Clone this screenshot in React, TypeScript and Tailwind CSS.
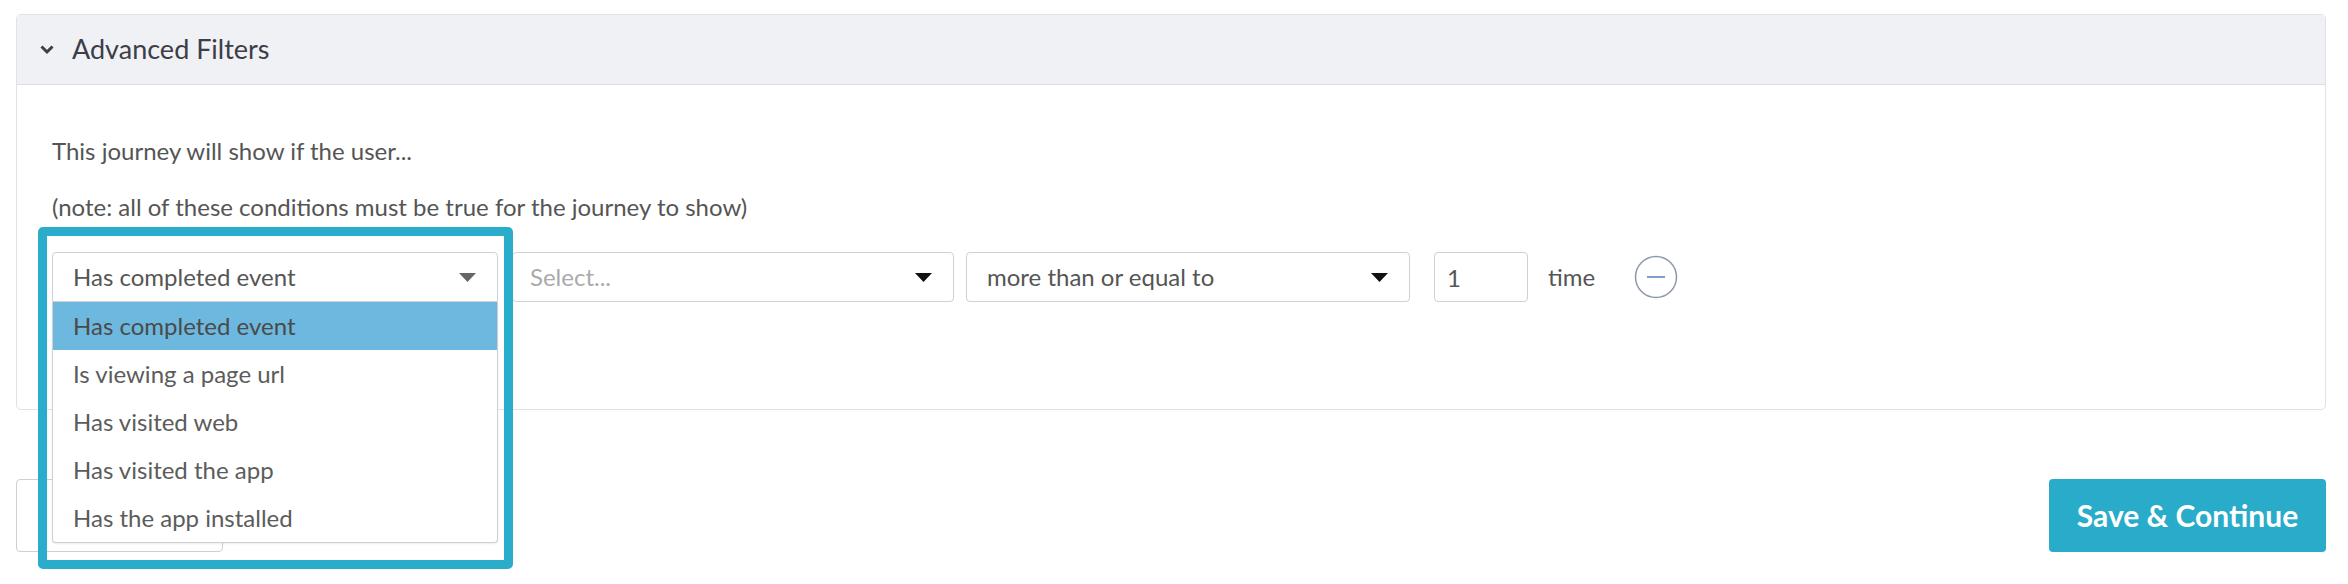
import React from "react";

const options = [
  "Has completed event",
  "Is viewing a page url",
  "Has visited web",
  "Has visited the app",
  "Has the app installed",
];

const Caret = ({ color }: { color: string }) => (
  <svg width="17" height="9" viewBox="0 0 17 9" className="shrink-0">
    <path d="M0 0 L17 0 L8.5 9 Z" fill={color} />
  </svg>
);

const App = () => {
  return (
    <div className="relative h-[584px] w-full bg-white pl-[16px] pr-[22px] pt-[14px] font-['Lato',sans-serif] text-[#555]">
      {/* filters card */}
      <div className="h-[396px] rounded-[5px] border border-[#e2e2e4]">
        <div className="flex h-[70px] items-center gap-[18px] rounded-t-[5px] border-b border-[#dedee2] bg-[#f0f1f5] pl-[23px]">
          <svg width="14" height="11" viewBox="0 0 14 11">
            <path d="M1.5 2.5 L7 8 L12.5 2.5" fill="none" stroke="#3d3d48" strokeWidth="3" />
          </svg>
          <span className="text-[27px] text-[#3d3d48]">Advanced Filters</span>
        </div>

        <div className="pl-[35px] pt-[51px]">
          <p className="text-[24px] leading-[30px]">This journey will show if the user...</p>
          <p className="mt-[26px] text-[24px] leading-[30px]">
            (note: all of these conditions must be true for the journey to show)
          </p>

          <div className="mt-[30px] flex items-center">
            <div className="relative w-[446px]">
              <div className="flex h-[50px] items-center justify-between rounded-t-[4px] border border-[#cfcfd4] pl-[20px] pr-[21px] text-[24px] text-[#555]">
                <span>Has completed event</span>
                <Caret color="#666" />
              </div>
              <div className="absolute left-0 top-full z-20 w-full rounded-b-[4px] border border-t-0 border-[#cfcfd4] bg-white shadow-[0_1px_2px_rgba(0,0,0,0.08)]">
                {options.map((o, i) => (
                  <div
                    key={o}
                    className={
                      i === 0
                        ? "flex h-[48px] items-center bg-[#6db8de] pl-[20px] text-[24px] text-[#4a4a4a]"
                        : "flex h-[48px] items-center pl-[20px] text-[24px] text-[#5c5c5c]"
                    }
                  >
                    {o}
                  </div>
                ))}
              </div>
            </div>

            <div className="ml-[14px] flex h-[50px] w-[442px] items-center justify-between rounded-[4px] border border-[#cfcfd4] pl-[17px] pr-[21px] text-[24px]">
              <span className="text-[#aaa]">Select...</span>
              <Caret color="#111" />
            </div>

            <div className="ml-[12px] flex h-[50px] w-[444px] items-center justify-between rounded-[4px] border border-[#cfcfd4] pl-[20px] pr-[21px] text-[24px]">
              <span>more than or equal to</span>
              <Caret color="#111" />
            </div>

            <input
              readOnly
              value="1"
              className="ml-[24px] h-[50px] w-[94px] rounded-[4px] border border-[#cfcfd4] pl-[12px] text-[24px] text-[#555] outline-none"
            />

            <span className="ml-[20px] text-[24px]">time</span>

            <button type="button" className="ml-[39px]">
              <svg width="44" height="44" viewBox="0 0 44 44">
                <circle cx="22" cy="22" r="20.5" fill="none" stroke="#8d99ab" strokeWidth="1.5" />
                <line x1="13" y1="22" x2="31" y2="22" stroke="#7d9fcb" strokeWidth="2" />
              </svg>
            </button>
          </div>
        </div>
      </div>

      {/* footer */}
      <div className="mt-[69px] flex items-center justify-between">
        <button
          type="button"
          aria-label="Back"
          className="h-[73px] w-[207px] rounded-[4px] border border-[#cfcfd4] bg-white"
        />
        <button
          type="button"
          className="h-[73px] w-[277px] rounded-[4px] bg-[#29abca] text-[30px] font-bold text-white"
        >
          Save &amp; Continue
        </button>
      </div>

      {/* highlight annotation */}
      <div className="pointer-events-none absolute left-[38px] top-[227px] z-30 h-[342px] w-[475px] rounded-[5px] border-[9px] border-[#29adcb]" />
    </div>
  );
};

export default App;
